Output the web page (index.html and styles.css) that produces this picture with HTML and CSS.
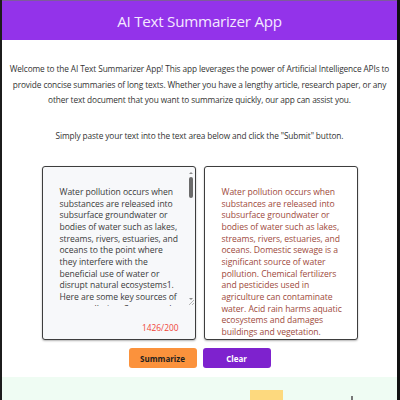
FILE: index.html
```html
<!DOCTYPE html>
<html lang="en">
<head>
<meta charset="utf-8">
<title>AI Text Summarizer App</title>
<link rel="stylesheet" href="styles.css">
</head>
<body>
<div class="frame">
  <header class="app-header">
    <h1 class="app-title">AI Text Summarizer App</h1>
  </header>
  <main class="content">
    <p class="intro">Welcome to the AI Text Summarizer App! This app leverages the power of Artificial Intelligence APIs to provide concise summaries of long texts. Whether you have a lengthy article, research paper, or any other text document that you want to summarize quickly, our app can assist you.</p>
    <p class="hint">Simply paste your text into the text area below and click the "Submit" button.</p>
    <div class="boxes">
      <div class="box box-input">
        <div class="input-wrap">
          <textarea class="input-text">Water pollution occurs when substances are released into subsurface groundwater or bodies of water such as lakes, streams, rivers, estuaries, and oceans to the point where they interfere with the beneficial use of water or disrupt natural ecosystems1. Here are some key sources of water pollution: Sewage and wastewater: Domestic sewage is a significant source of water pollution. It contains harmful substances like microorganisms, chemicals, and nutrients. Industrial waste: Factories and industrial plants release pollutants such as heavy metals, solvents, and toxic chemicals into rivers and lakes. Agricultural runoff: Chemical fertilizers and pesticides used in agriculture can be washed into nearby water bodies and contaminate water. Oil spills: Accidents involving oil tankers and offshore drilling release large amounts of oil into the ocean. Acid rain: Emissions from vehicles and power plants cause acid rain, which harms aquatic ecosystems and damages buildings and vegetation. Plastic waste: Plastic debris pollutes oceans and harms marine life that mistakes it for food. Thermal pollution: Power stations discharge heated water that lowers oxygen levels.</textarea>
          <div class="scrollbar">
            <span class="arrow arrow-up"></span>
            <span class="thumb"></span>
            <span class="arrow arrow-down"></span>
          </div>
          <span class="resize-grip"></span>
        </div>
        <div class="counter">1426/200</div>
      </div>
      <div class="box box-output">
        <p class="summary">Water pollution occurs when substances are released into subsurface groundwater or bodies of water such as lakes, streams, rivers, estuaries, and oceans. Domestic sewage is a significant source of water pollution. Chemical fertilizers and pesticides used in agriculture can contaminate water. Acid rain harms aquatic ecosystems and damages buildings and vegetation.</p>
      </div>
    </div>
    <div class="actions">
      <button class="btn btn-summarize" type="button">Summarize</button>
      <button class="btn btn-clear" type="button">Clear</button>
    </div>
  </main>
  <section class="footer-area">
    <div class="yellow-block"></div>
    <div class="gray-dot"></div>
  </section>
</div>
</body>
</html>
```

FILE: styles.css
```css
* { box-sizing: border-box; }
html, body { margin: 0; padding: 0; }
body {
  background: #ffffff;
  font-family: "Open Sans", "Noto Sans", sans-serif;
}
.frame {
  height: 400px;
  overflow: hidden;
  border-left: 2px solid #1c1c1c;
  border-right: 3px solid #111111;
  background: #ffffff;
  display: flex;
  flex-direction: column;
}
.app-header {
  height: 40px;
  flex: none;
  background: #9333ea;
  border-top: 1px solid #7d5b9c;
  display: flex;
  align-items: center;
  justify-content: center;
}
.app-title {
  margin: 0;
  font-size: 15.2px;
  font-weight: 400;
  color: #f3e8ff;
  letter-spacing: -0.25px;
}
.content {
  flex: none;
  padding: 0 7px;
}
.intro {
  margin: 21px 0 0;
  font-size: 8.3px;
  line-height: 15.5px;
  color: #333333;
  text-align: center;
  letter-spacing: -0.12px;
}
.hint {
  margin: 20px 0 0;
  font-size: 8.3px;
  line-height: 15.5px;
  color: #333333;
  text-align: center;
  letter-spacing: -0.12px;
}
.boxes {
  margin-top: 23px;
  display: flex;
  justify-content: center;
  gap: 8px;
}
.box {
  width: 154px;
  height: 174px;
  border: 1.5px solid #3d3d3d;
  border-radius: 3px;
  box-shadow: 0 1px 2px rgba(0,0,0,0.3);
}
.box-input {
  background: #f7f8fa;
  display: flex;
  flex-direction: column;
  padding-top: 3px;
}
.input-wrap {
  position: relative;
  height: 136px;
}
.input-text {
  display: block;
  width: 100%;
  height: 136px;
  border: none;
  outline: none;
  resize: none;
  background: transparent;
  padding: 17px 13px 0 17px;
  font-family: inherit;
  font-size: 8.6px;
  line-height: 11.67px;
  color: #3a3a3a;
  letter-spacing: -0.05px;
  overflow: hidden;
}
.scrollbar {
  position: absolute;
  top: 0;
  right: 1px;
  width: 6px;
  height: 130px;
  display: flex;
  flex-direction: column;
  align-items: center;
}
.arrow {
  width: 0;
  height: 0;
  border-left: 2px solid transparent;
  border-right: 2px solid transparent;
}
.arrow-up { border-bottom: 2px solid #8a8a8a; margin-top: 2px; }
.arrow-down { border-top: 2px solid #8a8a8a; margin-top: auto; }
.thumb {
  margin-top: 3px;
  width: 4px;
  height: 21px;
  border-radius: 2px;
  background: #6b6b6b;
}
.resize-grip {
  position: absolute;
  right: 1px;
  bottom: 1px;
  width: 5px;
  height: 5px;
  background: linear-gradient(135deg, transparent 45%, #b5b5b5 45%, #b5b5b5 55%, transparent 55%, transparent 70%, #b5b5b5 70%, #b5b5b5 80%, transparent 80%);
}
.counter {
  margin-top: 16px;
  padding-right: 16px;
  text-align: right;
  font-size: 8.4px;
  line-height: 11px;
  color: #f04438;
}
.box-output {
  background: #ffffff;
  padding: 20px 9px 0 17px;
}
.summary {
  margin: 0;
  font-size: 8.6px;
  line-height: 11.67px;
  color: #9e4a3c;
  letter-spacing: -0.05px;
}
.actions {
  margin-top: 8px;
  display: flex;
  justify-content: center;
  gap: 6px;
}
.btn {
  width: 68px;
  height: 20px;
  border: none;
  border-radius: 3px;
  font-family: inherit;
  font-size: 8px;
  font-weight: 700;
  padding: 0;
}
.btn-summarize { background: #fb923c; color: #1f1f1f; }
.btn-clear { background: #7e22ce; color: #ffffff; }
.footer-area {
  margin-top: 9px;
  flex: 1;
  background: #effcf3;
  position: relative;
}
.yellow-block {
  margin: 13px 0 0 248px;
  width: 33px;
  height: 20px;
  background: #fdd97e;
}
.gray-dot {
  position: absolute;
  left: 349px;
  top: 19px;
  width: 2px;
  height: 4px;
  background: #777777;
}
```
